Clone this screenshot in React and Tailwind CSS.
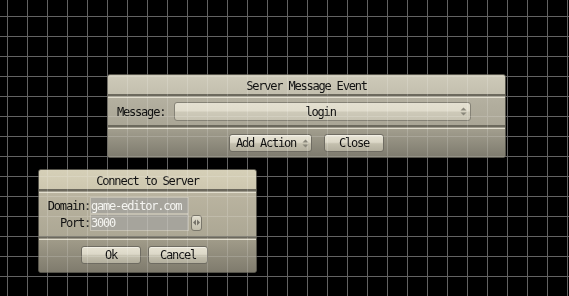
import React from "react";

const font = "font-['DejaVu_Sans_Mono',monospace] text-[12px] tracking-[-1.2px] leading-none";

const Btn = ({ children, className = "" }) => (
  <div
    className={`flex items-center justify-center h-[18px] rounded-[3px] border border-[#6f6c62] bg-[linear-gradient(to_bottom,#e6e2d3_0%,#dcd8c8_45%,#c4c0ae_55%,#b3af9e_100%)] text-[#111] shadow-[inset_0_1px_0_#f2efe4] ${className}`}
  >
    {children}
  </div>
);

const UpDown = () => (
  <svg width="7" height="9" viewBox="0 0 7 9" className="shrink-0">
    <path d="M3.5 0.5 L6.5 3.5 L0.5 3.5 Z" fill="#8a877b" />
    <path d="M3.5 8.5 L6.5 5.5 L0.5 5.5 Z" fill="#8a877b" />
  </svg>
);

const Separator = () => (
  <div className="flex flex-col">
    <div className="h-[2px] bg-[#6c695d]" />
    <div className="h-[1px] bg-[#9c988a]" />
    <div className="h-[1px] bg-[#e2dece]" />
  </div>
);

export default function App() {
  return (
    <div className={`relative w-[569px] h-[296px] bg-black overflow-hidden ${font}`}>
      {/* grid on the canvas */}
      <div className="pointer-events-none absolute inset-0 bg-[linear-gradient(to_right,#434343_1px,transparent_1px),linear-gradient(to_bottom,#434343_1px,transparent_1px)] bg-[size:20px_20px] bg-[position:7px_16px]" />

      {/* Server Message Event */}
      <div className="absolute left-[107px] top-[74px] w-[399px] h-[84px] flex flex-col rounded-[3px] border border-[#55534a] overflow-hidden bg-[#8c8979]">
        <div className="h-[19px] flex items-center justify-center bg-[linear-gradient(to_bottom,#cecab9,#c3bfae)] text-[#111] pt-[2px]">
          Server Message Event
        </div>
        <Separator />
        <div className="h-[27px] flex items-center pl-[9px] pr-[34px] gap-[9px] bg-[linear-gradient(to_bottom,#b4b0a0,#aaa696)]">
          <span className="text-[#111]">Message:</span>
          <div className="flex-1 h-[19px] flex items-center rounded-[3px] border border-[#858276] bg-[linear-gradient(to_bottom,#e4e0d1_0%,#e0dccc_45%,#cdc9b8_55%,#c6c2b1_100%)] text-[#111]">
            <span className="flex-1 text-center pl-[6px]">login</span>
            <span className="pr-[3px]">
              <UpDown />
            </span>
          </div>
        </div>
        <Separator />
        <div className="flex-1 flex items-start justify-center gap-[12px] pt-[5px] bg-[linear-gradient(to_bottom,#a29e8e,#7e7b6e)]">
          <Btn className="w-[83px] gap-[6px] pl-[4px]">
            <span>Add Action</span>
            <UpDown />
          </Btn>
          <Btn className="w-[60px]">Close</Btn>
        </div>
      </div>

      {/* Connect to Server */}
      <div className="absolute left-[38px] top-[169px] w-[219px] h-[104px] flex flex-col rounded-[3px] border border-[#55534a] overflow-hidden bg-[#8c8979]">
        <div className="h-[19px] flex items-center justify-center bg-[linear-gradient(to_bottom,#d6d0b8,#cdc7af)] text-[#111] pt-[2px]">
          Connect to Server
        </div>
        <Separator />
        <div className="h-[43px] flex flex-col pt-[4px] bg-[linear-gradient(to_bottom,#bab4a0,#aca794)]">
          <div className="flex items-center">
            <span className="w-[51px] text-right text-[#111]">Domain:</span>
            <div className="w-[99px] h-[17px] flex items-center border border-[#c4c0b2] bg-[#a6a49c] text-[#f4f4f0]">
              game-editor.com
            </div>
          </div>
          <div className="flex items-center">
            <span className="w-[51px] text-right text-[#111]">Port:</span>
            <div className="w-[99px] h-[17px] flex items-center border border-[#c4c0b2] bg-[#a6a49c] text-[#f4f4f0]">
              3000
            </div>
            <div className="ml-[2px] w-[11px] h-[16px] flex items-center justify-center rounded-[3px] border border-[#7a776b] bg-[linear-gradient(to_bottom,#e2decf,#c2beac)]">
              <svg width="7" height="7" viewBox="0 0 7 7">
                <path d="M0 3.5 L3 0.5 L3 6.5 Z" fill="#77746a" />
                <path d="M7 3.5 L4 0.5 L4 6.5 Z" fill="#77746a" />
              </svg>
            </div>
          </div>
        </div>
        <Separator />
        <div className="flex-1 flex items-start pl-[42px] gap-[7px] pt-[6px] bg-[linear-gradient(to_bottom,#a09b89,#7f7b6d)]">
          <Btn className="w-[60px]">Ok</Btn>
          <Btn className="w-[60px]">Cancel</Btn>
        </div>
      </div>

      {/* faint grid showing through the translucent windows */}
      <div className="pointer-events-none absolute inset-0 mix-blend-screen bg-[linear-gradient(to_right,#2a2a2a_1px,transparent_1px),linear-gradient(to_bottom,#2a2a2a_1px,transparent_1px)] bg-[size:20px_20px] bg-[position:7px_16px]" />
    </div>
  );
}
